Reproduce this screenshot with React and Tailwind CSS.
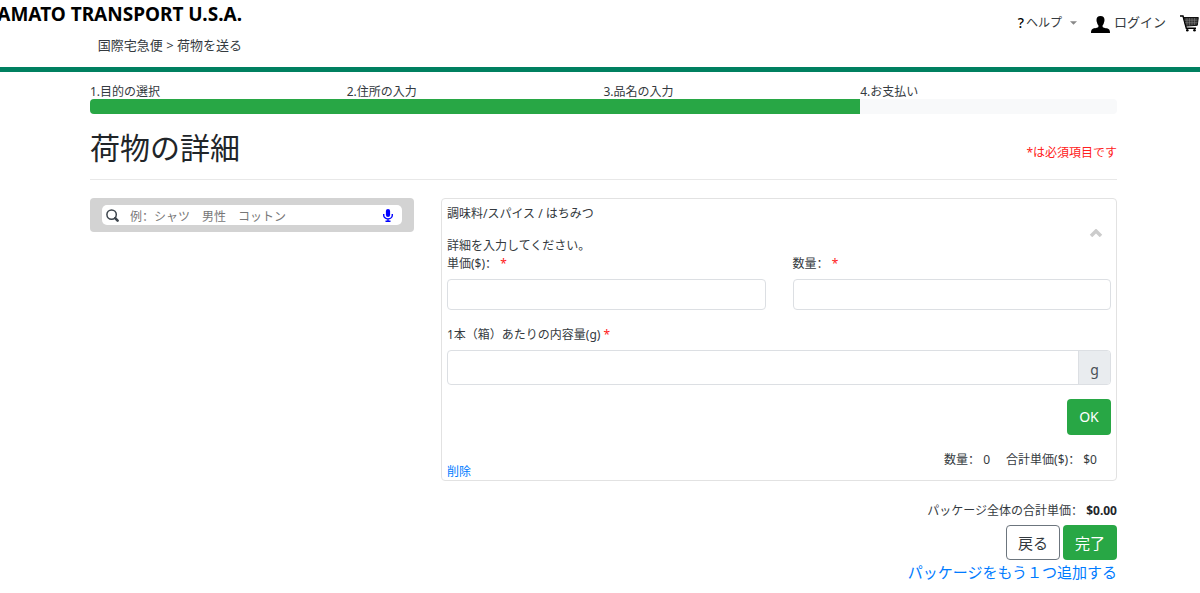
import React from 'react';

const steps = ['1.目的の選択', '2.住所の入力', '3.品名の入力', '4.お支払い'];

function Required() {
  return <span className="text-[#ff2020]">*</span>;
}

function Colon() {
  return <span lang="zh-CN" className="font-['Noto_Sans_CJK_SC',sans-serif] leading-none">：</span>;
}

function Header() {
  return (
    <header className="flex h-[72px] items-start justify-between border-b-[5px] border-[#008060]">
      <div className="flex w-[242px] flex-col items-end">
        <a href="#" className="text-[19px] leading-7 font-bold whitespace-nowrap text-black">
          AMATO TRANSPORT U.S.A.
        </a>
        <p className="mt-[7px] text-[13px] leading-5">国際宅急便 &gt; 荷物を送る</p>
      </div>
      <nav className="flex h-[46px] items-center pr-px text-xs">
        <button type="button" className="flex items-center">
          <span className="mr-0.5 text-sm font-medium text-black">?</span>
          ヘルプ
          <svg className="ml-2 h-1 w-[7px]" viewBox="0 0 8 4" aria-hidden="true">
            <path d="M0 0h8L4 4z" fill="#888" />
          </svg>
        </button>
        <a href="#" className="ml-3.5 flex items-center gap-1 text-[13px]">
          <svg className="mt-0.5 h-[17px] w-[19px]" viewBox="0 0 19 17" preserveAspectRatio="none" aria-hidden="true">
            <path d="M9.500 0C6.800 0 5.500 1.300 5.500 3.800c0 1.400.2 2.200.6 2.900.3 1.300.7 2.100 1.300 2.600v1.500C7 12 3.500 12 1.500 13 .4 13.600 0 14.800 0 17h19c0-2.200-.4-3.400-1.500-4-2-1-5.500-1-5.900-2.200V9.300c.6-.5 1-1.300 1.300-2.600.4-.7.6-1.500.6-2.900C13.500 1.300 12.200 0 9.500 0z" fill="#000" />
          </svg>
          ログイン
        </a>
        <a href="#" aria-label="カート" className="ml-3.5">
          <svg className="h-[17px] w-[19px]" viewBox="0 0 19 17" aria-hidden="true">
            <path d="M0 1h3l3.300 12.300H16" fill="none" stroke="#000" strokeWidth="1.400" />
            <path d="M3.700 2.500h14.600l-1 7.800-11.500.8z" fill="#333" stroke="#000" strokeWidth=".9" />
            <path d="M7 3v7.500M9.500 3v7.500M12 3v7M14.500 3v7M4.500 5.200h13M5 7.700h12.500" stroke="#888" strokeWidth=".5" />
            <circle cx="7.300" cy="15.200" r="1.300" />
            <circle cx="14.500" cy="15.200" r="1.300" />
          </svg>
        </a>
      </nav>
    </header>
  );
}

function Search() {
  return (
    <form role="search" className="rounded-[4px] bg-[#d3d3d3] px-3 py-[7px]">
      <div className="flex h-5 items-center rounded-[5px] bg-white pr-2 pl-1">
        <svg className="h-[13px] w-[13px] shrink-0" viewBox="0 0 13 13" fill="none" stroke="#3c444c" aria-hidden="true">
          <circle cx="5.600" cy="5.600" r="4.700" strokeWidth="1.500" />
          <path d="M9.200 9.200l2.400 2.400" strokeWidth="2.600" strokeLinecap="round" />
        </svg>
        <input
          type="text"
          lang="zh-CN"
          aria-label="品名を検索"
          placeholder="例：シャツ　男性　コットン"
          className="ml-[11px] h-[18px] min-w-0 flex-1 bg-transparent font-['Noto_Sans_CJK_SC',sans-serif] text-xs text-[#777] outline-none placeholder:text-[#777]"
        />
        <button type="button" aria-label="音声入力">
          <svg className="h-[13px] w-3" viewBox="0 0 12 13" aria-hidden="true">
            <rect x="3.900" y="0" width="4.200" height="8" rx="2.100" fill="#0000ff" />
            <path d="M1.700 5v1.200a4.300 3.700 0 0 0 8.600 0V5M6 9.900v2.400M3.500 12.200h5" fill="none" stroke="#0000ff" strokeWidth="1.400" />
          </svg>
        </button>
      </div>
    </form>
  );
}

function ItemCard() {
  const box = 'w-full rounded-[4px] border border-[#dcdfe3] bg-white px-3 outline-none';
  return (
    <section className="rounded-[4px] border border-[#e2e2e2] px-[5px]">
      <h2 className="mt-1.5 leading-[18px]">調味料/スパイス / はちみつ</h2>
      <div className="flex h-3.5 items-end justify-end pr-2">
        <button type="button" aria-label="折りたたむ">
          <svg className="h-2 w-3.5" viewBox="0 0 14 8" aria-hidden="true">
            <path d="M2 7l5-5 5 5" fill="none" stroke="#ccc" strokeWidth="3.500" />
          </svg>
        </button>
      </div>
      <p className="leading-[18px]">詳細を入力してください。</p>
      <div className="grid grid-cols-2 gap-[27px]">
        <div>
          <label htmlFor="price" className="mb-1.5 block leading-[18px]">単価($)<Colon /> <Required /></label>
          <input id="price" type="text" className={box + ' h-[31px]'} />
        </div>
        <div>
          <label htmlFor="count" className="mb-1.5 block leading-[18px]">数量<Colon /> <Required /></label>
          <input id="count" type="text" className={box + ' h-[31px]'} />
        </div>
      </div>
      <label htmlFor="amount" className="mt-4 mb-1.5 block leading-[18px]">1本（箱）あたりの内容量(g) <Required /></label>
      <div className="flex h-[35px] overflow-hidden rounded-[4px] border border-[#dcdfe3]">
        <input id="amount" type="text" className="min-w-0 flex-1 px-3 outline-none" />
        <span className="flex w-8 items-center justify-center border-l border-[#dcdfe3] bg-[#e9ecef] pt-1 text-sm text-[#495057]">g</span>
      </div>
      <div className="mt-3.5 flex justify-end">
        <button type="button" className="h-9 w-11 rounded-[4px] bg-[#28a745] text-sm text-white">OK</button>
      </div>
      <p className="mt-4 flex justify-end gap-4 pr-3.5 leading-[18px]">
        <span>数量<Colon /> 0</span>
        <span>合計単価($)<Colon /> $0</span>
      </p>
      <a href="#" className="-mt-[5px] block w-fit leading-4 text-[#007bff]">削除</a>
    </section>
  );
}

export default function App() {
  return (
    <div lang="ja" className="min-h-screen bg-white font-['Noto_Sans','Noto_Sans_CJK_JP',sans-serif] text-xs text-[#343a40]">
      <Header />
      <main className="pr-[83px] pl-[90px]">
        <ol className="grid grid-cols-4 pt-3 leading-[15px]">
          {steps.map((step) => <li key={step}>{step}</li>)}
        </ol>
        <div role="progressbar" aria-label="進行状況" aria-valuenow={75} aria-valuemin={0} aria-valuemax={100} className="h-[15px] overflow-hidden rounded-[4px] bg-[#f8f9fa]">
          <div className="h-full w-3/4 bg-[#28a745]" />
        </div>
        <div className="flex h-[66px] items-center justify-between border-b border-[#e8e8e8] pt-0.5">
          <h1 className="text-[30px] leading-9 text-[#212529]">荷物の詳細</h1>
          <p className="pt-2.5 text-[#ff2020]">*は必須項目です</p>
        </div>
        <div className="grid grid-cols-[324fr_676fr] items-start gap-[27px] pt-[18px]">
          <Search />
          <ItemCard />
        </div>
        <div className="flex flex-col items-end pt-[21px]">
          <p className="leading-[18px]">パッケージ全体の合計単価<Colon /> <strong className="font-bold text-[#212529]">$0.00</strong></p>
          <div className="mt-[5px] flex gap-[3px] text-[15px]">
            <button type="button" className="h-[35px] w-[54px] rounded-[4px] border border-[#6c757d] text-[#343a40]">戻る</button>
            <button type="button" className="h-[35px] w-[54px] rounded-[4px] bg-[#28a745] text-white">完了</button>
          </div>
          <a href="#" className="text-[15px] leading-6 text-[#007bff]">パッケージをもう１つ追加する</a>
        </div>
      </main>
    </div>
  );
}
